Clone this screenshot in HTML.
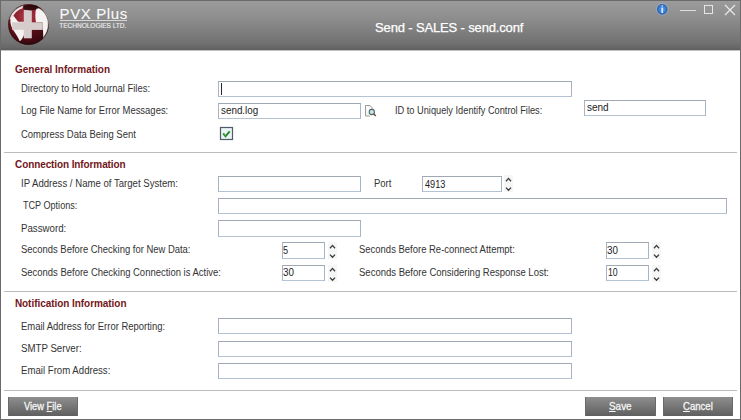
<!DOCTYPE html><html><head><meta charset="utf-8"><style>
html,body{margin:0;padding:0;}
body{width:741px;height:420px;position:relative;overflow:hidden;background:#fff;font-family:"Liberation Sans",sans-serif;}
.t{position:absolute;white-space:nowrap;}
.in{position:absolute;box-sizing:border-box;border:1px solid #a8b4c3;border-top-color:#a0a8b3;border-bottom-color:#b4c3d3;background:#fff;}
.sp{position:absolute;width:9px;height:17px;background:#f6f6f6;}
.hdr{position:absolute;left:0;top:0;width:741px;height:50px;background:linear-gradient(#9c9c9c 0%,#8e8e8e 35%,#727272 85%,#666 96%,#5c5c5c 100%);}
.sep{position:absolute;left:4px;width:733px;height:1px;background:#bcbcbc;}
.btn{position:absolute;box-sizing:border-box;background:linear-gradient(#8e8e8e,#5f5f5f);border-left:1px solid #6a6a6a;border-right:1px solid #6a6a6a;}
.bt{position:absolute;white-space:nowrap;color:#f0f0f0;font-size:10px;}
</style></head><body>
<div class="hdr"></div>
<div style="position:absolute;left:0;top:50px;width:741px;height:1px;background:#c4c4c4"></div>
<div style="position:absolute;left:0;top:0;width:741px;height:1px;background:#6a6a6a"></div>
<svg style="position:absolute;left:0;top:0" width="60" height="50" viewBox="0 0 60 50">
<defs><radialGradient id="g" cx="0.45" cy="0.3" r="0.75"><stop offset="0" stop-color="#b23a4a"/><stop offset="0.4" stop-color="#8a1f2c"/><stop offset="0.75" stop-color="#500c15"/><stop offset="1" stop-color="#24060a"/></radialGradient></defs>
<circle cx="28.5" cy="24.5" r="20.2" fill="url(#g)"/>
<path d="M31 30 L43.5 30 L43 38 L36 43 L31 43 Z" fill="#3e0810" opacity="0.6"/>
<path d="M10.3 21 C10.8 18.5 12 16.5 13.8 16 C15.5 18 17 21 18.5 21.8 L24 21.8 L24.5 33 C24 36 22 39.5 19.8 41.3 C18.5 38 16 34 13.5 30.5 C11.8 28 10.5 24.5 10.3 21 Z" fill="#f6f2f2"/>
<path d="M10.4 19.5 A18.6 18.6 0 0 1 23.5 6.5" fill="none" stroke="#eee8e8" stroke-width="2.8"/>
<path d="M36.5 7.8 C42 8.5 47.5 13 48.6 21 C49 28 46.5 34 43.3 38.2 L43 30 L42.6 22.3 L36 22.3 C35 17 35.2 11 36.5 7.8 Z" fill="#f6f2f2"/>
<rect x="23.8" y="10.1" width="8" height="28.2" fill="#d6cccc"/>
<rect x="12.2" y="22.3" width="30.6" height="7.6" fill="#d6cccc"/>
<ellipse cx="30.5" cy="7.6" rx="8" ry="2.8" fill="#1a0508" opacity="0.8"/>
<circle cx="28.5" cy="24.5" r="19.9" fill="none" stroke="#22060a" stroke-width="1.1" opacity="0.5"/>
</svg>
<div class="t" style="left:59.60px;top:6.30px;font-size:15px;line-height:15px;color:#fafafa;letter-spacing:0.600px;-webkit-text-stroke:0.1px currentColor;">PVX Plus</div>
<div style="position:absolute;left:60px;top:20px;width:67px;height:1px;background:#d6d6d6"></div>
<div class="t" style="left:59.32px;top:22.51px;font-size:6.6px;line-height:6.6px;color:#eeeeee;letter-spacing:-0.070px;-webkit-text-stroke:0.12px currentColor;">TECHNOLOGIES LTD.</div>
<div class="t" style="left:375.10px;top:20.80px;font-size:13px;line-height:13px;color:#fff;letter-spacing:-0.151px;-webkit-text-stroke:0.25px currentColor;">Send - SALES - send.conf</div>
<svg style="position:absolute;left:655px;top:2px" width="15" height="15" viewBox="0 0 15 15">
<defs><radialGradient id="ib" cx="0.5" cy="0.5" r="0.5"><stop offset="0" stop-color="#5aa0ea"/><stop offset="0.7" stop-color="#3a78cc"/><stop offset="1" stop-color="#2a5aa8"/></radialGradient></defs>
<circle cx="7.2" cy="7.3" r="5.9" fill="none" stroke="#9ab4d4" stroke-width="0.9" opacity="0.7"/>
<circle cx="7.2" cy="7.3" r="5.2" fill="url(#ib)"/>
<rect x="6.4" y="5.6" width="1.7" height="5.4" fill="#d4eaff"/><circle cx="7.25" cy="3.9" r="0.8" fill="#b8d8f8"/>
</svg>
<div style="position:absolute;left:680px;top:9.5px;width:16px;height:1.3px;background:#dcdcdc"></div>
<div style="position:absolute;left:704px;top:5px;width:9px;height:9px;box-sizing:border-box;border:1px solid #e6e6e6"></div>
<svg style="position:absolute;left:724px;top:4px" width="12" height="12" viewBox="0 0 12 12"><path d="M1 1 L11 11 M11 1 L1 11" stroke="#ececec" stroke-width="1.1"/></svg>
<div class="t" style="left:15.00px;top:65.23px;font-size:10px;line-height:10px;color:#731620;font-weight:bold;">General Information</div>
<div class="t" style="left:21.18px;top:84.33px;font-size:10.0px;line-height:10.0px;color:#333;transform:scaleX(0.9437);transform-origin:0 0;">Directory to Hold Journal Files:</div>
<div class="in" style="left:218px;top:81px;width:354px;height:16px"></div>
<div style="position:absolute;left:221px;top:83px;width:1px;height:12px;background:#2a2a2a"></div>
<div class="t" style="left:21.20px;top:105.53px;font-size:10.0px;line-height:10.0px;color:#333;transform:scaleX(0.9463);transform-origin:0 0;">Log File Name for Error Messages:</div>
<div class="in" style="left:218px;top:103px;width:143px;height:16px"></div>
<div class="t" style="left:220.96px;top:106.13px;font-size:10.0px;line-height:10.0px;color:#222;transform:scaleX(0.9848);transform-origin:0 0;">send.log</div>
<svg style="position:absolute;left:364px;top:104px" width="13" height="13" viewBox="0 0 13 13">
<path d="M1.5 1.5 H6 L8 3.5 V6 M1.5 1.5 V12 H6" fill="#f4f4f4" stroke="#9a9a9a" stroke-width="1"/>
<circle cx="7.8" cy="8" r="2.6" fill="#cfe6e6" stroke="#4a6a6a" stroke-width="1.1"/>
<path d="M9.6 9.8 L11.8 12" stroke="#6a4a3a" stroke-width="1.4"/>
</svg>
<div class="t" style="left:394.70px;top:106.23px;font-size:10.0px;line-height:10.0px;color:#333;transform:scaleX(0.9233);transform-origin:0 0;">ID to Uniquely Identify Control Files:</div>
<div class="in" style="left:584px;top:100px;width:122px;height:16px"></div>
<div class="t" style="left:586.94px;top:102.83px;font-size:10.0px;line-height:10.0px;color:#222;transform:scaleX(0.9976);transform-origin:0 0;">send</div>
<div class="t" style="left:20.94px;top:130.03px;font-size:10.0px;line-height:10.0px;color:#333;transform:scaleX(0.9476);transform-origin:0 0;">Compress Data Being Sent</div>
<svg style="position:absolute;left:219px;top:126px" width="15" height="15" viewBox="0 0 15 15">
<rect x="1.5" y="1.5" width="12" height="12" fill="#e9f4f4" stroke="#4f5b68" stroke-width="1.2"/>
<path d="M4.2 7.4 L6.5 10.3 L10.7 5.3" fill="none" stroke="#2a842a" stroke-width="1.9"/><path d="M4.6 7.3 L6.5 9.6" fill="none" stroke="#7fd87f" stroke-width="0.7" opacity="0.8"/>
</svg>
<div class="sep" style="top:152px"></div>
<div class="t" style="left:15.10px;top:160.34px;font-size:10px;line-height:10px;color:#731620;font-weight:bold;letter-spacing:-0.107px;">Connection Information</div>
<div class="t" style="left:21.20px;top:179.23px;font-size:10.0px;line-height:10.0px;color:#333;transform:scaleX(0.9591);transform-origin:0 0;">IP Address / Name of Target System:</div>
<div class="in" style="left:218px;top:176px;width:143px;height:16px"></div>
<div class="t" style="left:373.70px;top:179.13px;font-size:10.0px;line-height:10.0px;color:#333;transform:scaleX(0.9482);transform-origin:0 0;">Port</div>
<div class="in" style="left:422px;top:176px;width:80px;height:16px"></div>
<div class="t" style="left:425.26px;top:180.13px;font-size:10.0px;line-height:10.0px;color:#222;transform:scaleX(0.9122);transform-origin:0 0;">4913</div>
<div class="sp" style="left:503.5px;top:174.8px"><svg width="9" height="17" viewBox="0 0 9 17"><path d="M2 6.2 L4.5 3.4 L7 6.2" fill="none" stroke="#3a3a3a" stroke-width="1.3"/><path d="M2 12.6 L4.5 15.3 L7 12.6" fill="none" stroke="#3a3a3a" stroke-width="1.3"/></svg></div>
<div class="t" style="left:23.00px;top:200.63px;font-size:10.0px;line-height:10.0px;color:#333;transform:scaleX(0.9069);transform-origin:0 0;">TCP Options:</div>
<div class="in" style="left:218px;top:198px;width:509px;height:16px"></div>
<div class="t" style="left:21.18px;top:223.94px;font-size:10.0px;line-height:10.0px;color:#333;transform:scaleX(0.9706);transform-origin:0 0;">Password:</div>
<div class="in" style="left:218px;top:220px;width:143px;height:17px"></div>
<div class="t" style="left:21.20px;top:245.34px;font-size:10.0px;line-height:10.0px;color:#333;transform:scaleX(0.9440);transform-origin:0 0;">Seconds Before Checking for New Data:</div>
<div class="in" style="left:282px;top:242px;width:43px;height:17px"></div>
<div class="t" style="left:283.42px;top:245.53px;font-size:10.0px;line-height:10.0px;color:#222;transform:scaleX(0.9200);transform-origin:0 0;">5</div>
<div class="sp" style="left:327.5px;top:242px"><svg width="9" height="17" viewBox="0 0 9 17"><path d="M2 6.2 L4.5 3.4 L7 6.2" fill="none" stroke="#3a3a3a" stroke-width="1.3"/><path d="M2 12.6 L4.5 15.3 L7 12.6" fill="none" stroke="#3a3a3a" stroke-width="1.3"/></svg></div>
<div class="t" style="left:359.46px;top:245.34px;font-size:10.0px;line-height:10.0px;color:#333;transform:scaleX(0.9472);transform-origin:0 0;">Seconds Before Re-connect Attempt:</div>
<div class="in" style="left:606px;top:242px;width:43px;height:17px"></div>
<div class="t" style="left:607.42px;top:245.53px;font-size:10.0px;line-height:10.0px;color:#222;transform:scaleX(0.9825);transform-origin:0 0;">30</div>
<div class="sp" style="left:651.5px;top:242px"><svg width="9" height="17" viewBox="0 0 9 17"><path d="M2 6.2 L4.5 3.4 L7 6.2" fill="none" stroke="#3a3a3a" stroke-width="1.3"/><path d="M2 12.6 L4.5 15.3 L7 12.6" fill="none" stroke="#3a3a3a" stroke-width="1.3"/></svg></div>
<div class="t" style="left:21.20px;top:268.04px;font-size:10.0px;line-height:10.0px;color:#333;transform:scaleX(0.9462);transform-origin:0 0;">Seconds Before Checking Connection is Active:</div>
<div class="in" style="left:282px;top:265px;width:43px;height:16px"></div>
<div class="t" style="left:283.42px;top:267.54px;font-size:10.0px;line-height:10.0px;color:#222;transform:scaleX(0.9825);transform-origin:0 0;">30</div>
<div class="sp" style="left:327.5px;top:265px"><svg width="9" height="17" viewBox="0 0 9 17"><path d="M2 6.2 L4.5 3.4 L7 6.2" fill="none" stroke="#3a3a3a" stroke-width="1.3"/><path d="M2 12.6 L4.5 15.3 L7 12.6" fill="none" stroke="#3a3a3a" stroke-width="1.3"/></svg></div>
<div class="t" style="left:359.46px;top:268.04px;font-size:10.0px;line-height:10.0px;color:#333;transform:scaleX(0.9521);transform-origin:0 0;">Seconds Before Considering Response Lost:</div>
<div class="in" style="left:606px;top:265px;width:43px;height:16px"></div>
<div class="t" style="left:607.92px;top:267.54px;font-size:10.0px;line-height:10.0px;color:#222;transform:scaleX(0.8716);transform-origin:0 0;">10</div>
<div class="sp" style="left:651.5px;top:265px"><svg width="9" height="17" viewBox="0 0 9 17"><path d="M2 6.2 L4.5 3.4 L7 6.2" fill="none" stroke="#3a3a3a" stroke-width="1.3"/><path d="M2 12.6 L4.5 15.3 L7 12.6" fill="none" stroke="#3a3a3a" stroke-width="1.3"/></svg></div>
<div class="sep" style="top:291px"></div>
<div class="t" style="left:14.90px;top:299.04px;font-size:10px;line-height:10px;color:#731620;font-weight:bold;letter-spacing:-0.050px;">Notification Information</div>
<div class="t" style="left:21.20px;top:322.24px;font-size:10.0px;line-height:10.0px;color:#333;transform:scaleX(0.9465);transform-origin:0 0;">Email Address for Error Reporting:</div>
<div class="in" style="left:218px;top:318px;width:354px;height:16px"></div>
<div class="t" style="left:21.20px;top:343.94px;font-size:10.0px;line-height:10.0px;color:#333;transform:scaleX(0.9680);transform-origin:0 0;">SMTP Server:</div>
<div class="in" style="left:218px;top:341px;width:354px;height:16px"></div>
<div class="t" style="left:21.20px;top:365.54px;font-size:10.0px;line-height:10.0px;color:#333;transform:scaleX(0.9627);transform-origin:0 0;">Email From Address:</div>
<div class="in" style="left:218px;top:363px;width:354px;height:16px"></div>
<div class="sep" style="top:390px"></div>
<div class="btn" style="left:8px;top:397px;width:70px;height:19px"></div>
<div class="t" style="left:23.86px;top:402.04px;font-size:10.0px;line-height:10.0px;color:#f4f4f4;transform:scaleX(0.9311);transform-origin:0 0;-webkit-text-stroke:0.3px currentColor;">View <u>F</u>ile</div>
<div class="btn" style="left:585px;top:397px;width:71px;height:19px"></div>
<div class="t" style="left:609.24px;top:402.04px;font-size:10.0px;line-height:10.0px;color:#f4f4f4;transform:scaleX(0.9926);transform-origin:0 0;-webkit-text-stroke:0.3px currentColor;"><u>S</u>ave</div>
<div class="btn" style="left:663px;top:397px;width:70px;height:19px"></div>
<div class="t" style="left:683.24px;top:402.04px;font-size:10.0px;line-height:10.0px;color:#f4f4f4;transform:scaleX(0.9573);transform-origin:0 0;-webkit-text-stroke:0.3px currentColor;"><u>C</u>ancel</div>
<div style="position:absolute;left:0;top:0;width:1px;height:420px;background:#6a6a6a"></div>
<div style="position:absolute;left:740px;top:0;width:1px;height:420px;background:#6a6a6a"></div>
<div style="position:absolute;left:0;top:419px;width:741px;height:1px;background:#6a6a6a"></div>
</body></html>
